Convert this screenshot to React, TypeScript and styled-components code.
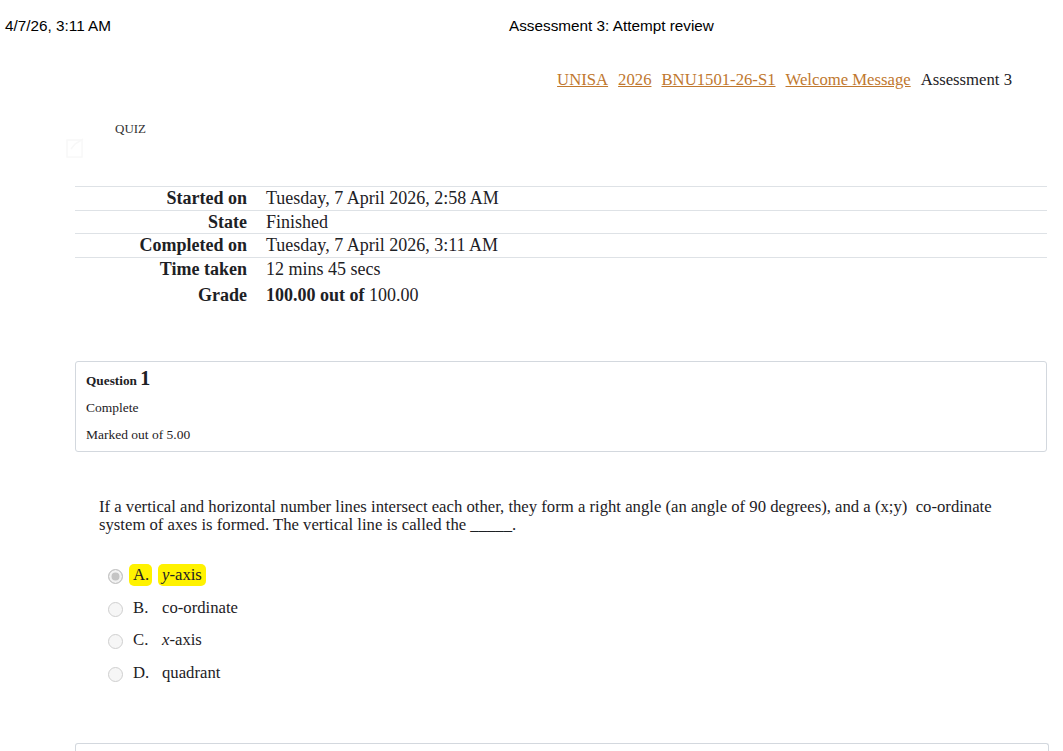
import React from 'react';
import styled, { createGlobalStyle } from 'styled-components';

const GlobalStyle = createGlobalStyle`
  body {
    margin: 0;
    background: #fff;
    font-family: "Liberation Serif", "Times New Roman", serif;
    color: #1d2125;
  }
`;

const Page = styled.div`
  width: 1063px;
`;

/** print header strip */
const PrintHeader = styled.header`
  height: 51px;
  display: flex;
  align-items: center;
  font-family: "Liberation Sans", Arial, sans-serif;
  font-size: 15.3px;
  color: #000;
`;

const HeaderDate = styled.span`
  margin-left: 5px;
  width: 504px;
`;

const HeaderTitle = styled.span``;

const Breadcrumb = styled.nav`
  margin-top: 20px;
  display: flex;
  justify-content: flex-end;
  gap: 10px;
  padding-right: 51px;
  font-size: 16.7px;
  line-height: 18px;
`;

const Crumb = styled.a`
  color: #c0782f;
  text-decoration: underline;
`;

const CurrentCrumb = styled.span`
  color: #1d2125;
`;

const QuizHeader = styled.div`
  margin-top: 32px;
  padding-left: 66px;
`;

const QuizLabel = styled.div`
  padding-left: 49px;
  font-size: 13px;
  line-height: 15px;
  color: #333;
`;

const QuizIcon = styled.svg`
  display: block;
  margin-top: 1px;
`;

const Summary = styled.table`
  margin: 27px 0 0 75px;
  width: 972px;
  border-collapse: collapse;
  font-size: 18px;
`;

const Row = styled.tr<{ $plain?: boolean }>`
  border-top: ${(p) => (p.$plain ? 'none' : '1px solid #dee2e6')};
  height: ${(p) => (p.$plain ? '29px' : '23.5px')};
`;

const Label = styled.th`
  width: 172px;
  padding: 0 9px 0 0;
  text-align: right;
  font-weight: bold;
  line-height: 18px;
`;

const Value = styled.td`
  padding: 0 0 0 10px;
  line-height: 18px;
`;

const QuestionInfo = styled.div`
  margin: 51px 0 0 75px;
  width: 950px;
  padding: 5px 10px 9px;
  border: 1px solid #d3d8de;
  border-radius: 3px;
`;

const QNumber = styled.h3`
  margin: 0;
  font-size: 13.3px;
  line-height: 22px;
  font-weight: bold;
`;

const QNo = styled.span`
  font-size: 20px;
`;

const InfoLine = styled.div<{ $gap: number }>`
  margin-top: ${(p) => p.$gap}px;
  font-size: 13.5px;
  line-height: 15px;
`;

const QuestionText = styled.p`
  margin: 46px 0 0 99px;
  width: 930px;
  font-size: 16.7px;
  line-height: 18px;
`;

const Answers = styled.div`
  margin: 24.5px 0 0 108px;
`;

const Option = styled.label`
  display: flex;
  align-items: center;
  height: 32.7px;
  font-size: 16.7px;
`;

const Radio = styled.input`
  appearance: none;
  box-sizing: border-box;
  width: 15px;
  height: 15px;
  margin: 3px 10px 0 0;
  border: 1px solid #cfcfcf;
  border-radius: 50%;
  background: #f6f6f6;

  &:checked {
    background: #c4c4c4;
    box-shadow: inset 0 0 0 2.5px #f2f2f2;
    border-color: #c4c4c4;
  }
`;

const Mark = styled.span<{ $hl?: boolean }>`
  padding: 1px 4px;
  border-radius: 5px;
  background: ${(p) => (p.$hl ? '#fff200' : 'transparent')};
`;

const Letter = styled(Mark)`
  box-sizing: border-box;
  width: 23px;
  margin: 0 6px 0 -4px;
  padding-right: 2px;
`;

const NextBox = styled.div`
  margin: 54px 0 0 75px;
  width: 972px;
  height: 20px;
  border: 1px solid #d3d8de;
  border-bottom: none;
  border-radius: 3px 3px 0 0;
`;

const options = [
  { letter: 'A.', text: 'y', rest: '-axis', italic: true, checked: true },
  { letter: 'B.', text: '', rest: 'co-ordinate', italic: false, checked: false },
  { letter: 'C.', text: 'x', rest: '-axis', italic: true, checked: false },
  { letter: 'D.', text: '', rest: 'quadrant', italic: false, checked: false },
];

export default function App() {
  return (
    <Page>
      <GlobalStyle />
      <PrintHeader>
        <HeaderDate>4/7/26, 3:11 AM</HeaderDate>
        <HeaderTitle>Assessment 3: Attempt review</HeaderTitle>
      </PrintHeader>

      <Breadcrumb>
        <Crumb>UNISA</Crumb>
        <Crumb>2026</Crumb>
        <Crumb>BNU1501-26-S1</Crumb>
        <Crumb>Welcome Message</Crumb>
        <CurrentCrumb>Assessment 3</CurrentCrumb>
      </Breadcrumb>

      <QuizHeader>
        <QuizLabel>QUIZ</QuizLabel>
        <QuizIcon width="20" height="22" viewBox="0 0 20 22">
          <rect x="1" y="3" width="15" height="17" fill="none" stroke="#f8f8f8" strokeWidth="1.5" />
          <path d="M5 12 L9 7 L17 2" fill="none" stroke="#f8f8f8" strokeWidth="1.5" />
        </QuizIcon>
      </QuizHeader>

      <Summary>
        <tbody>
          <Row>
            <Label>Started on</Label>
            <Value>Tuesday, 7 April 2026, 2:58 AM</Value>
          </Row>
          <Row>
            <Label>State</Label>
            <Value>Finished</Value>
          </Row>
          <Row>
            <Label>Completed on</Label>
            <Value>Tuesday, 7 April 2026, 3:11 AM</Value>
          </Row>
          <Row>
            <Label>Time taken</Label>
            <Value>12 mins 45 secs</Value>
          </Row>
          <Row $plain>
            <Label>Grade</Label>
            <Value>
              <b>100.00 out of</b> 100.00
            </Value>
          </Row>
        </tbody>
      </Summary>

      <QuestionInfo>
        <QNumber>
          Question <QNo>1</QNo>
        </QNumber>
        <InfoLine $gap={8.5}>Complete</InfoLine>
        <InfoLine $gap={12}>Marked out of 5.00</InfoLine>
      </QuestionInfo>

      <QuestionText>
        If a vertical and horizontal number lines intersect each other, they form a right angle (an
        angle of 90 degrees), and a (x;y)&nbsp; co-ordinate system of axes is formed. The vertical line
        is called the _____.
      </QuestionText>

      <Answers>
        {options.map((o) => (
          <Option key={o.letter}>
            <Radio type="radio" name="q1" disabled checked={o.checked} readOnly />
            <Letter $hl={o.checked}>{o.letter}</Letter>
            <Mark $hl={o.checked}>
              {o.italic ? <i>{o.text}</i> : null}
              {o.rest}
            </Mark>
          </Option>
        ))}
      </Answers>

      <NextBox />
    </Page>
  );
}
